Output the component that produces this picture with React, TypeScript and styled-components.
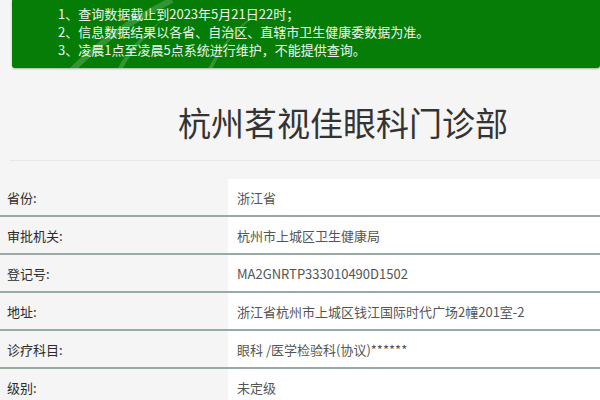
import React from "react";
import styled, { createGlobalStyle } from "styled-components";

const Global = createGlobalStyle`
  html, body { margin: 0; padding: 0; background: #f5f5f5; }
  body { font-family: "Noto Sans CJK SC", "Noto Sans", sans-serif; overflow: hidden; }
`;

const Page = styled.div`
  width: 600px;
  height: 400px;
  background: #f5f5f5;
  overflow: hidden;
`;

const Notice = styled.div`
  margin-left: 12px;
  background: #067d06;
  border-radius: 0 0 3px 3px;
  padding: 5px 0 9px 46px;
  color: #eef7ee;
  font-size: 13px;
  line-height: 18px;
  position: relative;
  overflow: hidden;
  box-shadow: 0 1px 2px rgba(0, 80, 0, 0.35);
`;

const NoticeLine = styled.div`
  position: relative;
  white-space: nowrap;
`;

const Leaf = styled.svg`
  position: absolute;
  left: 0;
  top: 0;
  opacity: 0.18;
`;

const TitleBar = styled.div`
  margin: 0 0 0 10px;
  height: 93px;
  border-bottom: 1px solid #e6e6e6;
  display: flex;
  align-items: center;
  padding: 16px 0 0 168px;
  box-sizing: border-box;
`;

const Title = styled.h1`
  margin: 0;
  font-size: 33px;
  font-weight: 400;
  color: #333;
  line-height: 40px;
`;

const Table = styled.div`
  margin-top: 18px;
  display: flex;
  flex-direction: column;
`;

const Row = styled.div`
  display: grid;
  grid-template-columns: 228px 1fr;
  height: 38px;
  border-bottom: 2px solid #97aba4;
  box-sizing: border-box;
`;

const Label = styled.div`
  display: flex;
  align-items: center;
  padding-left: 7px;
  font-size: 13px;
  font-weight: 400;
  color: #2a2a2a;
`;

const Value = styled.div`
  display: flex;
  align-items: center;
  padding-left: 9px;
  background: #ffffff;
  font-size: 13px;
  color: #555;
`;

const rows: [string, string][] = [
  ["省份:", "浙江省"],
  ["审批机关:", "杭州市上城区卫生健康局"],
  ["登记号:", "MA2GNRTP333010490D1502"],
  ["地址:", "浙江省杭州市上城区钱江国际时代广场2幢201室-2"],
  ["诊疗科目:", "眼科 /医学检验科(协议)******"],
  ["级别:", "未定级"],
];

export default function App() {
  return (
    <Page>
      <Global />
      <Notice>
        <Leaf width="260" height="70" viewBox="0 0 260 70">
          <path d="M60 70 C90 40 120 20 160 0" stroke="#fff" strokeWidth="6" fill="none" />
          <path d="M110 70 C120 50 140 30 150 20 C130 35 115 50 105 70 Z" fill="#fff" />
          <path d="M200 70 C210 45 230 25 250 10 C225 25 210 45 195 70 Z" fill="#fff" />
        </Leaf>
        <NoticeLine>1、查询数据截止到2023年5月21日22时；</NoticeLine>
        <NoticeLine>2、信息数据结果以各省、自治区、直辖市卫生健康委数据为准。</NoticeLine>
        <NoticeLine>3、凌晨1点至凌晨5点系统进行维护，不能提供查询。</NoticeLine>
      </Notice>
      <TitleBar>
        <Title>杭州茗视佳眼科门诊部</Title>
      </TitleBar>
      <Table>
        {rows.map(([k, v]) => (
          <Row key={k}>
            <Label>{k}</Label>
            <Value>{v}</Value>
          </Row>
        ))}
      </Table>
    </Page>
  );
}
